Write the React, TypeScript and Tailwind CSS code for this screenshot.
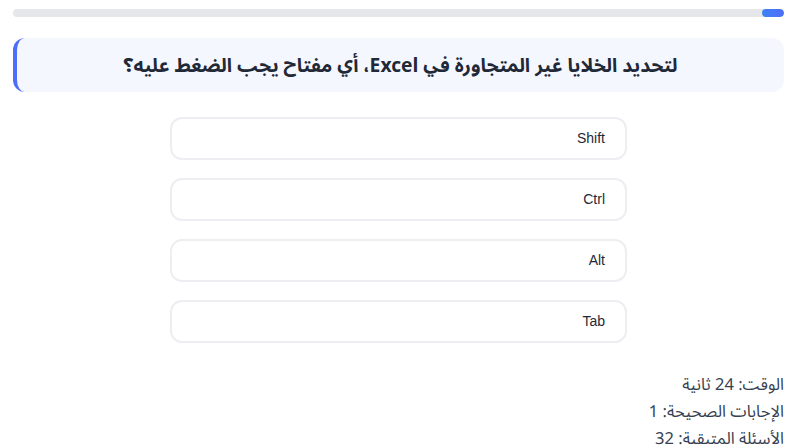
import React from "react";

const options = ["Shift", "Ctrl", "Alt", "Tab"];

export default function App() {
  return (
    <div dir="rtl" className="bg-white w-[800px] h-[445px] overflow-hidden pl-[13px] pr-[16px] pt-[9px]" style={{ fontFamily: '"Noto Sans Arabic UI", "Noto Sans Arabic", "Noto Sans", "DejaVu Sans", sans-serif' }}>
      <div className="h-[8px] w-full rounded-full bg-[#e5e7eb] overflow-hidden flex">
        <div className="h-full w-[22px] rounded-full bg-gradient-to-l from-[#4f6ef7] to-[#3b82f6]" />
      </div>
      <div className="mt-[21px] h-[54px] rounded-xl bg-[#f5f7ff] border-l-4 border-[#4f6ef7] flex items-center justify-center">
        <h2 className="text-[19.3px] font-bold text-[#1f2937] leading-none">
          لتحديد الخلايا غير المتجاورة في Excel، أي مفتاح يجب الضغط عليه؟
        </h2>
      </div>
      <div className="mt-[25px] flex flex-col items-center gap-[18px]">
        {options.map((o) => (
          <button
            key={o}
            className="w-[457px] h-[43px] rounded-xl border-2 border-[#eceef1] bg-white flex items-center justify-start pr-[20px] text-[14px] text-[#1f2937]"
            style={{ fontFamily: '"Liberation Sans", Arial, sans-serif' }}
          >
            {o}
          </button>
        ))}
      </div>
      <div className="mt-[27px] flex flex-col text-[16.5px] text-[#374151] leading-[27px]">
        <div>الوقت: 24 ثانية</div>
        <div>الإجابات الصحيحة: 1</div>
        <div>الأسئلة المتبقية: 32</div>
      </div>
    </div>
  );
}
